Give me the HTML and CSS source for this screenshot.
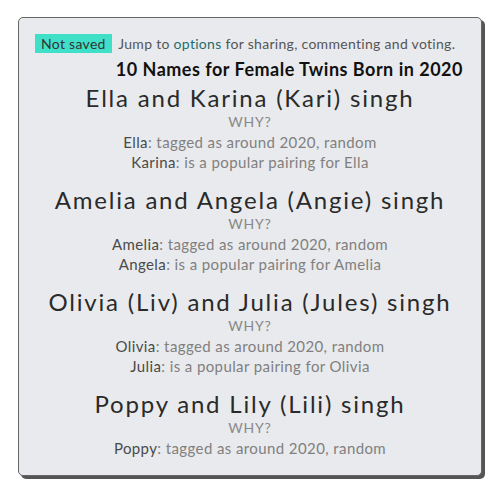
FILE: index.html
```html
<!DOCTYPE html>
<html lang="en">
<head>
  <meta charset="UTF-8" />
  <meta name="viewport" content="width=device-width, initial-scale=1.0"/>
  <title>10 Names for Female Twins Born in 2020</title>
  <link rel="stylesheet" href="styles.css">
</head>
<body>
  <div class="card">
    <div class="topline">
      <span class="badge">Not saved</span>
      Jump to <a href="#options">options</a> for sharing, commenting and voting.
    </div>
    <h2 class="title">10 Names for Female Twins Born in 2020</h2>

    <div class="pair">
      <h3>Ella and Karina (Kari) singh</h3>
      <div class="why">WHY?</div>
      <p><span class="name">Ella</span>: tagged as around 2020, random</p>
      <p><span class="name">Karina</span>: is a popular pairing for Ella</p>
    </div>

    <div class="pair">
      <h3>Amelia and Angela (Angie) singh</h3>
      <div class="why">WHY?</div>
      <p><span class="name">Amelia</span>: tagged as around 2020, random</p>
      <p><span class="name">Angela</span>: is a popular pairing for Amelia</p>
    </div>

    <div class="pair">
      <h3>Olivia (Liv) and Julia (Jules) singh</h3>
      <div class="why">WHY?</div>
      <p><span class="name">Olivia</span>: tagged as around 2020, random</p>
      <p><span class="name">Julia</span>: is a popular pairing for Olivia</p>
    </div>

    <div class="pair">
      <h3>Poppy and Lily (Lili) singh</h3>
      <div class="why">WHY?</div>
      <p><span class="name">Poppy</span>: tagged as around 2020, random</p>
    </div>
  </div>
</body>
</html>
```

FILE: styles.css
```css
body {
  margin: 0;
  padding: 17px 18px;
  background: #ffffff;
  font-family: Lato, 'Open Sans', sans-serif;
  color: #777;
}

.card {
  width: 462px;
  height: 457px;
  box-sizing: content-box;
  background: #e9eaed;
  border: 1px solid #666;
  border-radius: 5px;
  box-shadow: 3px 3px 0 #555;
  overflow: hidden;
}

.topline {
  padding: 16px 16px 0;
  font-size: 14px;
  line-height: 19px;
  letter-spacing: 0.3px;
  color: #555;
}

.badge {
  display: inline-block;
  background: #40e0c8;
  color: #333;
  padding: 0 6px;
  margin-right: 3px;
}

.topline a {
  color: #1e6e6e;
  text-decoration: none;
}

.title {
  margin: 5px 18px 4px 0;
  text-align: right;
  font-size: 18px;
  line-height: 22px;
  letter-spacing: 0.5px;
  font-weight: 700;
  color: #111;
}

.pair {
  text-align: center;
  margin-bottom: 14px;
}

.pair h3 {
  margin: 0;
  font-size: 24px;
  line-height: 28px;
  font-weight: 400;
  letter-spacing: 1.8px;
  color: #2a2a2a;
}

.why {
  font-size: 14px;
  line-height: 20px;
  letter-spacing: 0.8px;
  color: #888;
}

.pair p {
  margin: 0;
  font-size: 15px;
  line-height: 20px;
  letter-spacing: 0.4px;
  color: #808080;
}

.name {
  color: #4a4a4a;
}
```
